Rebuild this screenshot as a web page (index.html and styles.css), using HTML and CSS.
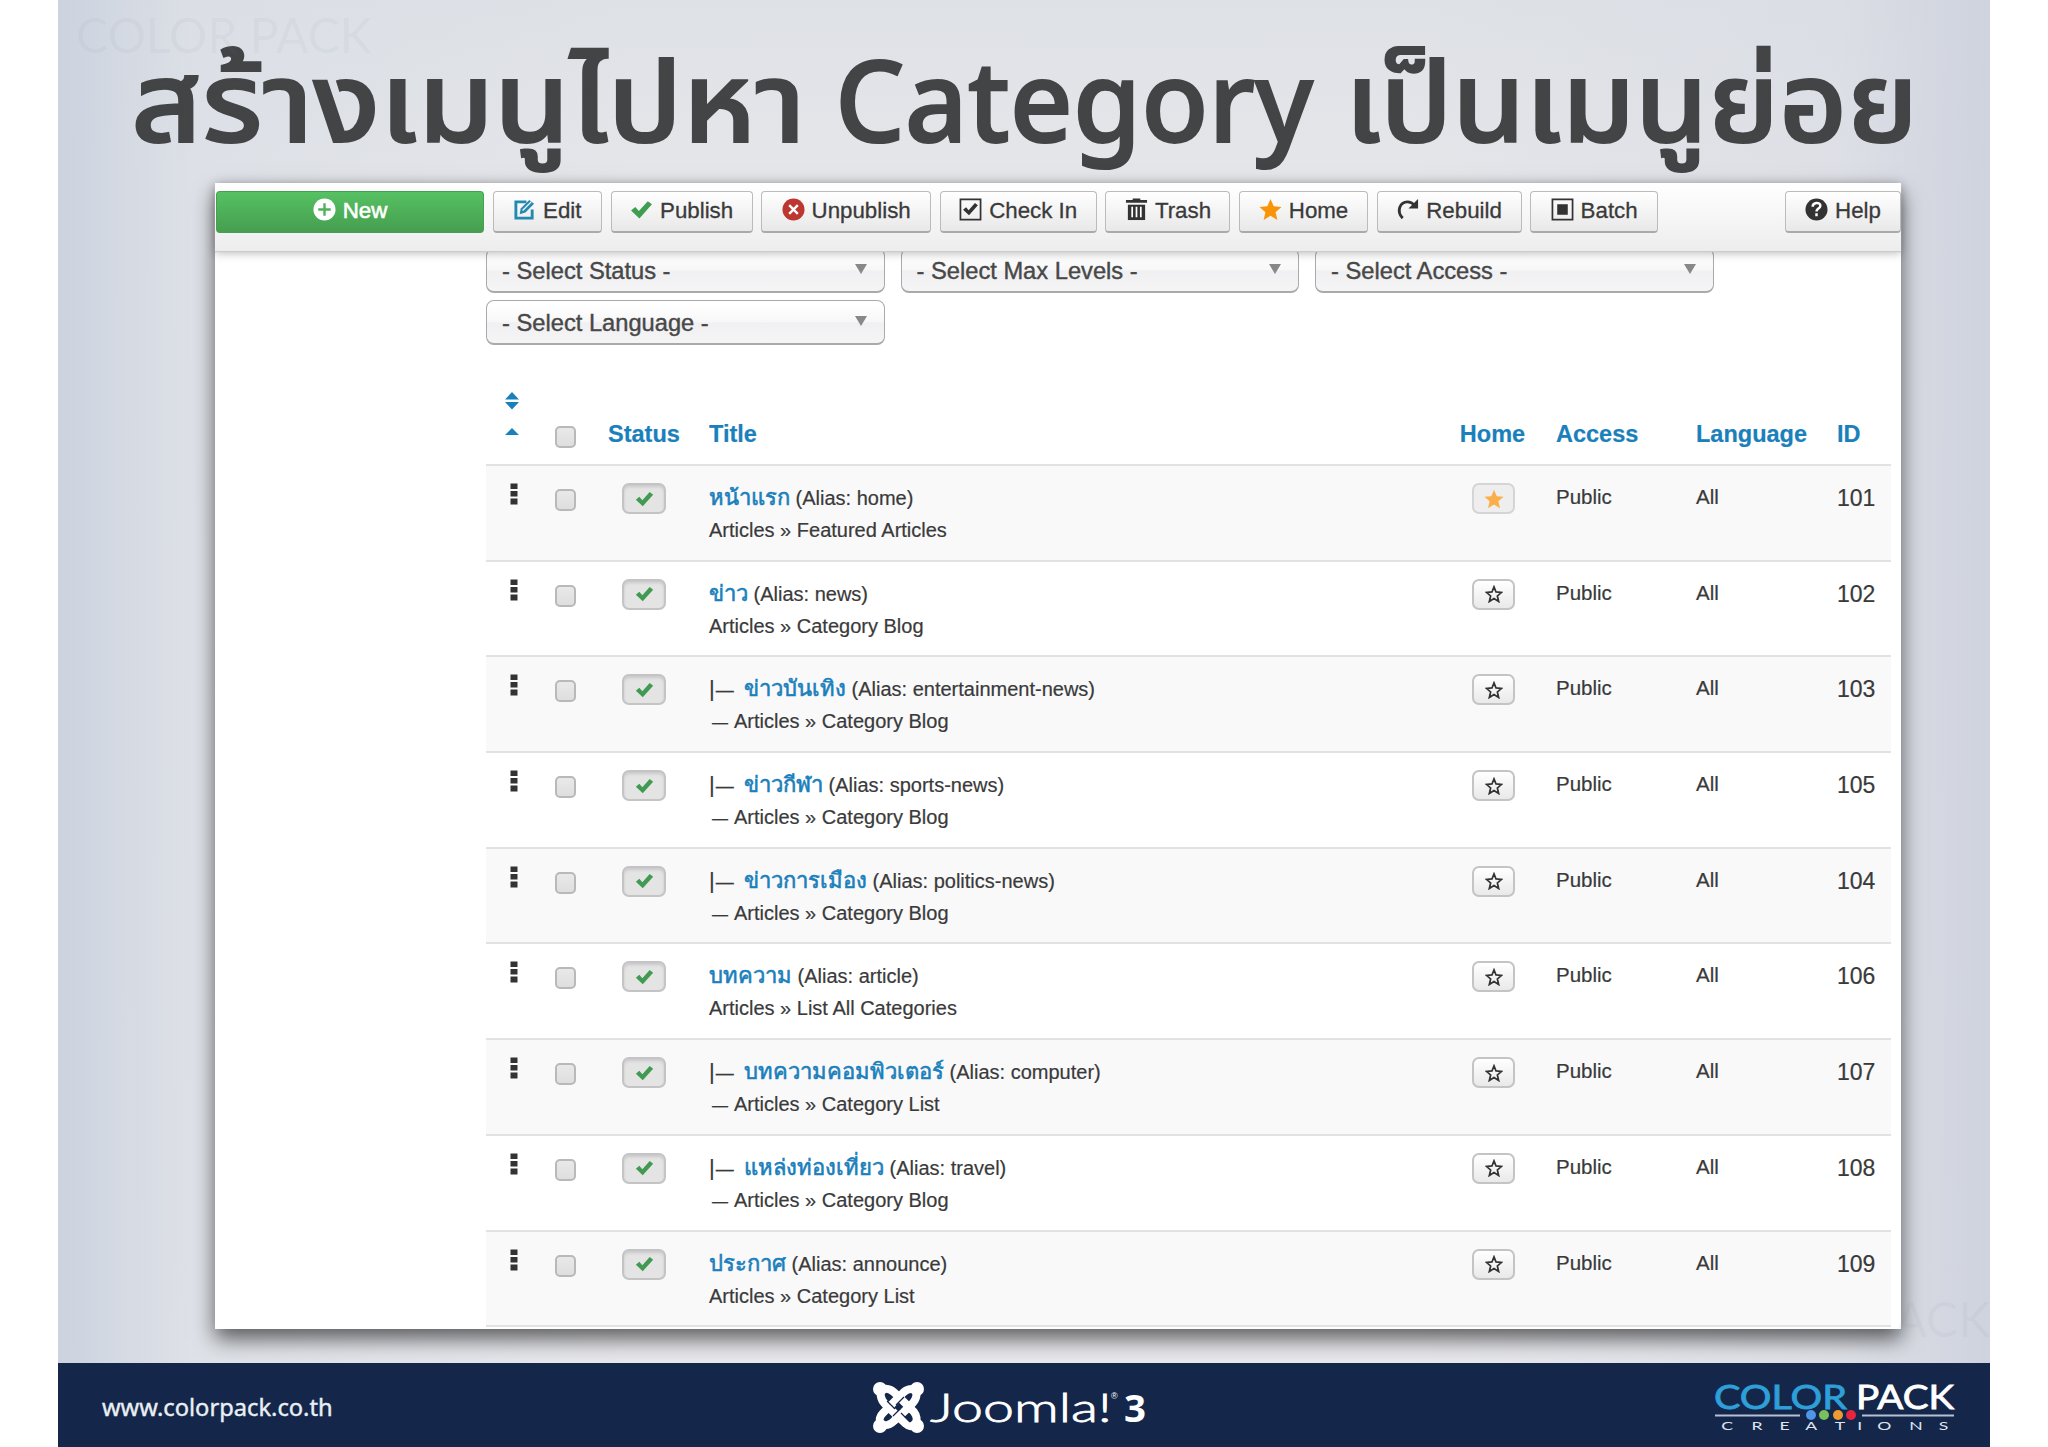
FILE: index.html
```html
<!DOCTYPE html>
<html lang="th">
<head>
    <meta charset="UTF-8">
    <title>สร้างเมนูไปหา Category เป็นเมนูย่อย</title>
    <link rel="stylesheet" href="styles.css">
</head>
<body>

    <!-- Shared icons -->
    <svg class="sprite">
        <symbol id="check" viewBox="0 0 22 18"><path d="M1 10 L5 6.500 L8.500 10.500 L17 1 L21 4 L9 17.500 Z"/></symbol>
        <symbol id="star" viewBox="0 0 24 24"><path d="M12 1 L15.300 8.700 L23.500 9.400 L17.300 14.800 L19.200 23 L12 18.600 L4.800 23 L6.700 14.800 L0.500 9.400 L8.700 8.700 Z"/></symbol>
        <symbol id="staro" viewBox="0 0 24 24"><path fill="none" stroke="currentColor" stroke-width="2.300" d="M12 2.500 L14.700 9.300 L22 9.900 L16.500 14.600 L18.200 22 L12 18 L5.800 22 L7.500 14.600 L2 9.900 L9.300 9.300 Z"/></symbol>
        <symbol id="grip" viewBox="0 0 8 22"><path d="M0.500 0.500h7v5.500h-7zM0.500 8h7v5.500h-7zM0.500 15.500h7v6h-7z"/></symbol>
    </svg>

    <div class="slide">
        <div class="watermark wm-top">COLOR PACK</div>
        <div class="watermark wm-bottom">ACK</div>

        <svg class="heading" viewBox="0 0 1932 183">
            <text x="73" y="142" textLength="675" lengthAdjust="spacingAndGlyphs">สร้างเมนูไปหา</text>
            <text x="777" y="142" textLength="478" lengthAdjust="spacingAndGlyphs">Category</text>
            <text x="1287" y="142" textLength="573" lengthAdjust="spacingAndGlyphs">เป็นเมนูย่อย</text>
        </svg>

        <div class="panel">
            <div class="toolbar">
                <div class="btn new"><svg viewBox="0 0 24 24"><circle cx="12" cy="12" r="11.500" fill="#fff"/><path d="M12 5.500v13M5.500 12h13" stroke="#4fb25a" stroke-width="2.500"/></svg>New</div>
                <div class="btn edit"><svg viewBox="0 0 24 24"><path d="M14 4H3v17h17v-9" fill="none" stroke="#2489b0" stroke-width="3"/><path d="M7 17l1-6 9-9 5 4-9 9z" fill="#2489b0"/><path d="M10 13l9-9" stroke="#fff" stroke-width="1.300"/></svg>Edit</div>
                <div class="btn publish"><svg class="green" viewBox="0 0 22 22"><use href="#check" width="22" height="18" y="2"/></svg>Publish</div>
                <div class="btn unpublish"><svg viewBox="0 0 24 24"><circle cx="12" cy="12" r="11.500" fill="#bd362f"/><path d="M7.500 7.500l9 9M16.500 7.500l-9 9" stroke="#fff" stroke-width="2.500"/></svg>Unpublish</div>
                <div class="btn checkin"><svg viewBox="0 0 24 24"><path d="M1.500 1.500h21v21h-21z" fill="none" stroke="#333" stroke-width="1.800"/><use href="#check" x="3.500" y="4" width="17" height="15"/></svg>Check In</div>
                <div class="btn trash"><svg viewBox="0 0 24 24"><path d="M1 3.500h22M8 2h8" stroke="#333" stroke-width="3"/><path d="M3 7h18v16H3z"/><path d="M7.500 9v11M12 9v11M16.500 9v11" stroke="#fff" stroke-width="1.800"/></svg>Trash</div>
                <div class="btn home"><svg class="orange" viewBox="0 0 24 24"><use href="#star"/></svg>Home</div>
                <div class="btn rebuild"><svg viewBox="0 0 24 24"><path d="M7 21C0 14 4 4 12 4c3 0 6 2 8 4" fill="none" stroke="#333" stroke-width="3"/><path d="M23 1v10H13z"/></svg>Rebuild</div>
                <div class="btn batch"><svg viewBox="0 0 24 24"><path d="M1.500 1.500h21v21h-21z" fill="none" stroke="#333" stroke-width="1.800"/><path d="M6.500 6.500h11v11h-11z"/></svg>Batch</div>
                <div class="btn help"><svg viewBox="0 0 24 24"><circle cx="12" cy="12" r="11.500"/><path d="M8 9c0-5 8-5 8-1 0 3-4 3-4 6M12 16v3" fill="none" stroke="#fff" stroke-width="2.600"/></svg>Help</div>
            </div>

            <div class="filters">
                <div class="select">- Select Status -<i></i></div>
                <div class="select">- Select Max Levels -<i></i></div>
                <div class="select">- Select Access -<i></i></div>
                <div class="select">- Select Language -<i></i></div>
            </div>

            <div class="table">
                <div class="row head">
                    <div class="order"><svg viewBox="0 0 14 52"><path d="M7 0l7 7.500H0zM0 10h14l-7 7.500zM7 36l7 7H0z"/></svg></div>
                    <div class="pick"><span class="box"></span></div>
                    <div class="status">Status</div>
                    <div class="title">Title</div>
                    <div class="default">Home</div>
                    <div>Access</div>
                    <div>Language</div>
                    <div>ID</div>
                </div>
                <div class="row">
                    <div class="order"><svg><use href="#grip"/></svg></div>
                    <div class="pick"><span class="box"></span></div>
                    <div class="status"><span class="mini on"><svg><use href="#check"/></svg></span></div>
                    <div class="title"><p><a>หน้าแรก</a> (Alias: home)</p><p>Articles » Featured Articles</p></div>
                    <div class="default"><span class="mini off"><svg><use href="#star"/></svg></span></div>
                    <div class="text">Public</div><div class="text">All</div><div class="id">101</div>
                </div>
                <div class="row">
                    <div class="order"><svg><use href="#grip"/></svg></div>
                    <div class="pick"><span class="box"></span></div>
                    <div class="status"><span class="mini on"><svg><use href="#check"/></svg></span></div>
                    <div class="title"><p><a>ข่าว</a> (Alias: news)</p><p>Articles » Category Blog</p></div>
                    <div class="default"><span class="mini"><svg><use href="#staro"/></svg></span></div>
                    <div class="text">Public</div><div class="text">All</div><div class="id">102</div>
                </div>
                <div class="row">
                    <div class="order"><svg><use href="#grip"/></svg></div>
                    <div class="pick"><span class="box"></span></div>
                    <div class="status"><span class="mini on"><svg><use href="#check"/></svg></span></div>
                    <div class="title child"><p><b>|<s>—</s></b><a>ข่าวบันเทิง</a> (Alias: entertainment-news)</p><p><em>—</em>Articles » Category Blog</p></div>
                    <div class="default"><span class="mini"><svg><use href="#staro"/></svg></span></div>
                    <div class="text">Public</div><div class="text">All</div><div class="id">103</div>
                </div>
                <div class="row">
                    <div class="order"><svg><use href="#grip"/></svg></div>
                    <div class="pick"><span class="box"></span></div>
                    <div class="status"><span class="mini on"><svg><use href="#check"/></svg></span></div>
                    <div class="title child"><p><b>|<s>—</s></b><a>ข่าวกีฬา</a> (Alias: sports-news)</p><p><em>—</em>Articles » Category Blog</p></div>
                    <div class="default"><span class="mini"><svg><use href="#staro"/></svg></span></div>
                    <div class="text">Public</div><div class="text">All</div><div class="id">105</div>
                </div>
                <div class="row">
                    <div class="order"><svg><use href="#grip"/></svg></div>
                    <div class="pick"><span class="box"></span></div>
                    <div class="status"><span class="mini on"><svg><use href="#check"/></svg></span></div>
                    <div class="title child"><p><b>|<s>—</s></b><a>ข่าวการเมือง</a> (Alias: politics-news)</p><p><em>—</em>Articles » Category Blog</p></div>
                    <div class="default"><span class="mini"><svg><use href="#staro"/></svg></span></div>
                    <div class="text">Public</div><div class="text">All</div><div class="id">104</div>
                </div>
                <div class="row">
                    <div class="order"><svg><use href="#grip"/></svg></div>
                    <div class="pick"><span class="box"></span></div>
                    <div class="status"><span class="mini on"><svg><use href="#check"/></svg></span></div>
                    <div class="title"><p><a>บทความ</a> (Alias: article)</p><p>Articles » List All Categories</p></div>
                    <div class="default"><span class="mini"><svg><use href="#staro"/></svg></span></div>
                    <div class="text">Public</div><div class="text">All</div><div class="id">106</div>
                </div>
                <div class="row">
                    <div class="order"><svg><use href="#grip"/></svg></div>
                    <div class="pick"><span class="box"></span></div>
                    <div class="status"><span class="mini on"><svg><use href="#check"/></svg></span></div>
                    <div class="title child"><p><b>|<s>—</s></b><a>บทความคอมพิวเตอร์</a> (Alias: computer)</p><p><em>—</em>Articles » Category List</p></div>
                    <div class="default"><span class="mini"><svg><use href="#staro"/></svg></span></div>
                    <div class="text">Public</div><div class="text">All</div><div class="id">107</div>
                </div>
                <div class="row">
                    <div class="order"><svg><use href="#grip"/></svg></div>
                    <div class="pick"><span class="box"></span></div>
                    <div class="status"><span class="mini on"><svg><use href="#check"/></svg></span></div>
                    <div class="title child"><p><b>|<s>—</s></b><a>แหล่งท่องเที่ยว</a> (Alias: travel)</p><p><em>—</em>Articles » Category Blog</p></div>
                    <div class="default"><span class="mini"><svg><use href="#staro"/></svg></span></div>
                    <div class="text">Public</div><div class="text">All</div><div class="id">108</div>
                </div>
                <div class="row">
                    <div class="order"><svg><use href="#grip"/></svg></div>
                    <div class="pick"><span class="box"></span></div>
                    <div class="status"><span class="mini on"><svg><use href="#check"/></svg></span></div>
                    <div class="title"><p><a>ประกาศ</a> (Alias: announce)</p><p>Articles » Category List</p></div>
                    <div class="default"><span class="mini"><svg><use href="#staro"/></svg></span></div>
                    <div class="text">Public</div><div class="text">All</div><div class="id">109</div>
                </div>
            </div>
        </div>

        <div class="footer">
            <div class="site">www.colorpack.co.th</div>
            <svg class="joomla" viewBox="0 0 280 60">
                <g fill="none" stroke="#fff" stroke-width="8">
                    <path d="M9 10C7 20 13 24 18 29L34 44C38 48 42 46 44 42"/>
                    <path d="M44 10C35 6 30 14 26 18L11 33C7 37 7 42 9 45"/>
                    <path d="M9 10C17 6 22 12 27 17L42 32C46 37 45 42 44 46"/>
                    <path d="M44 10C46 18 42 22 37 27L22 41C17 46 13 46 8 44"/>
                </g>
                <path d="M15 21L23 29M29 33L38 42M24 25L32 17M21 36L29 28" stroke="#14274a" stroke-width="1.200"/>
                <g fill="#fff"><circle cx="8" cy="9" r="7"/><circle cx="45" cy="9" r="7"/><circle cx="8" cy="46" r="7"/><circle cx="45" cy="46" r="7"/></g>
                <text class="word" x="58" y="42" textLength="182" lengthAdjust="spacingAndGlyphs">Joomla!</text>
                <text class="reg" x="239" y="19">®</text>
                <text class="three" x="252" y="42" textLength="22" lengthAdjust="spacingAndGlyphs">3</text>
            </svg>
            <svg class="colorpack" viewBox="0 0 244 52">
                <text class="name blue" x="0" y="26" textLength="133" lengthAdjust="spacingAndGlyphs">COLOR</text>
                <text class="name white" x="142" y="26" textLength="98" lengthAdjust="spacingAndGlyphs">PACK</text>
                <path d="M1 32.500H86M148 32.500H240" stroke="#b5c0d4" stroke-width="2"/>
                <circle cx="97" cy="32" r="5" fill="#4f96e8"/><circle cx="110" cy="32" r="5" fill="#78c05a"/><circle cx="124" cy="32" r="5" fill="#ee9a32"/><circle cx="137" cy="32" r="5" fill="#e5263f"/>
                <g class="sub" transform="scale(1.6 1)">
                    <text y="47" x="4.500 23.500 41 57 75.500 89.500 102 122 140.500">CREATIONS</text>
                </g>
            </svg>
        </div>
    </div>

</body>
</html>
```
FILE: styles.css
```css
body {
    margin: 0;
    background: #fff;
    font-family: "Liberation Sans", Arial, sans-serif;
    color: #3a3a3a;
}
p {
    margin: 0;
}
.sprite {
    display: none;
}
.slide {
    position: relative;
    width: 1932px;
    height: 1447px;
    margin-left: 58px;
    overflow: hidden;
    display: flex;
    flex-direction: column;
    background: linear-gradient(90deg, #ccd3df 0, rgba(218, 222, 229, 0.7) 7%, rgba(228, 229, 234, 0) 30%, rgba(232, 232, 237, 0) 70%, rgba(218, 221, 228, 0.7) 92%, #cfd3de 100%), linear-gradient(180deg, #dee1e6 0, #e5e6ea 12%, #e8e8ec 100%);
}
.watermark {
    position: absolute;
    font-family: Lato, sans-serif;
    color: rgba(120, 130, 150, 0.07);
    white-space: nowrap;
}
.wm-top {
    left: 18px;
    top: 6px;
    font-size: 48px;
}
.wm-bottom {
    right: 0;
    top: 1290px;
    font-size: 48px;
}
.heading {
    display: block;
    width: 1932px;
    height: 183px;
    flex: none;
    font-family: "Noto Sans", "Noto Sans Thai", sans-serif;
    font-size: 112px;
    font-weight: 500;
    fill: #424446;
    stroke: #424446;
    stroke-width: 2px;
}

/* Screenshot panel */
.panel {
    width: 1686px;
    height: 1146px;
    margin-left: 157px;
    flex: none;
    background: #fff;
    box-shadow: 0 10px 20px rgba(0, 0, 0, 0.6);
}
.toolbar {
    position: relative;
    z-index: 1;
    display: flex;
    gap: 8.800px;
    height: 60px;
    padding: 8px 0 0 1px;
    background: linear-gradient(#fff, #ededee);
    box-shadow: 0 1px 1px #ccc, 0 2px 9px rgba(0, 0, 0, 0.28);
}
.btn {
    box-sizing: border-box;
    height: 42px;
    display: flex;
    justify-content: center;
    align-items: center;
    gap: 7px;
    padding-bottom: 1px;
    border: 1px solid #bbb;
    border-bottom: 2px solid #aaa;
    border-radius: 4px;
    background: linear-gradient(#fff, #e8e8e9);
    font-size: 22.300px;
    white-space: nowrap;
    -webkit-text-stroke: 0.300px currentColor;
}
.btn svg {
    width: 23px;
    height: 23px;
    fill: #333;
    margin-top: -4px;
}
.btn .green {
    fill: #3f9d50;
}
.btn .orange {
    fill: #f89406;
}
.new {
    width: 268px;
    color: #fff;
    border-color: #46a050;
    background: linear-gradient(#56c162, #469f50);
    -webkit-text-stroke: 0.600px #fff;
}
.edit { width: 109px; }
.publish { width: 142px; }
.unpublish { width: 169.500px; }
.checkin { width: 157px; }
.trash { width: 125px; }
.home { width: 128.500px; }
.rebuild { width: 145px; }
.batch { width: 127.500px; }
.help { width: 116px; margin-left: auto; }

.filters {
    display: flex;
    flex-wrap: wrap;
    gap: 7px 16px;
    padding-left: 271px;
    margin-top: -3px;
}
.select {
    box-sizing: border-box;
    width: 398.500px;
    height: 45px;
    display: flex;
    justify-content: space-between;
    align-items: center;
    padding: 3px 17px 0 15px;
    border: 1px solid #aaa;
    border-bottom-width: 2px;
    border-radius: 8px;
    background: linear-gradient(#fff 10%, #f7f7f8 50%, #f0f0f2 52%, #f5f5f6 100%);
    font-size: 23.700px;
    color: #484848;
    -webkit-text-stroke: 0.400px currentColor;
}
.select i {
    border: 6.500px solid transparent;
    border-top: 10px solid #888;
    border-bottom: 0;
    margin-top: -6px;
}

/* Menu item list */
.table {
    margin: 38px 0 0 271px;
    width: 1405px;
}
.row {
    display: grid;
    grid-template-columns: 53px 53px 104px 733px 127px 140px 141px 54px;
    box-sizing: border-box;
    height: 95.700px;
    padding-top: 16px;
    border-top: 2px solid #e2e2e4;
    font-size: 20.500px;
    line-height: 32px;
    -webkit-text-stroke: 0.200px currentColor;
}
.row:nth-child(even) {
    background: #f9f9fa;
}
.row:last-child {
    border-bottom: 2px solid #e2e2e4;
    height: 97.700px;
}
.head {
    height: 81px;
    padding-top: 35px;
    border: 0;
    color: #1a80bb;
    font-size: 23.500px;
    font-weight: bold;
}
.order {
    text-align: center;
}
.order svg {
    display: block;
    width: 8px;
    height: 22px;
    margin: 1px 0 0 24px;
    fill: #333;
}
.head .order svg {
    width: 14px;
    height: 52px;
    fill: #1a80bb;
    margin: -26px 0 0 19px;
}
.box {
    display: block;
    box-sizing: border-box;
    width: 21px;
    height: 22px;
    margin: 7px auto 0;
    border: 2px solid #b9b9bb;
    border-radius: 5px;
    background: linear-gradient(#e9e9ea, #dededf);
}
.head .box {
    margin-top: 8px;
}
.status,
.default {
    text-align: center;
}
.head .status {
    text-align: left;
    padding-left: 16px;
}
.mini {
    box-sizing: border-box;
    display: flex;
    justify-content: center;
    align-items: center;
    width: 43px;
    height: 31px;
    margin: 1px auto 0;
    border: 2px solid #c4c4c6;
    border-radius: 7px;
    background: linear-gradient(#fff, #e9e9ea);
    color: #333;
}
.default .mini {
    margin-left: 43px;
}
.mini svg {
    width: 18px;
    height: 18px;
}
.mini.on {
    width: 44px;
    background: #e4e4e5;
    box-shadow: inset 0 2px 3px rgba(0, 0, 0, 0.12);
}
.mini.on svg {
    width: 19px;
    height: 16px;
    fill: #419a52;
}
.mini.off {
    background: #eee;
    border-color: #d5d5d6;
}
.mini.off svg {
    width: 20px;
    height: 20px;
    fill: #fbae4c;
}
.title {
    padding-left: 13px;
    font-size: 20px;
    white-space: nowrap;
}
.head .title {
    font-size: 23.500px;
}
.title a {
    font-size: 22px;
    color: #1a80bb;
    -webkit-text-stroke: 0.600px #1a80bb;
}
.title p {
    height: 32px;
}
.title b,
.title em {
    display: inline-block;
    font-weight: normal;
    font-style: normal;
}
.title b {
    width: 35px;
    font-size: 22px;
}
.title s {
    font-size: 18px;
    text-decoration: none;
    margin-left: 1px;
}
.title em {
    width: 22px;
    font-size: 16px;
    padding-left: 3px;
}
.text {
    margin-top: -1px;
}
.id {
    font-size: 23px;
}

.footer {
    display: flex;
    align-items: flex-start;
    height: 84px;
    margin-top: 34px;
    flex: none;
    background: #14274a;
}
.site {
    width: 770px;
    margin: 27px 0 0 44px;
    font-family: "Noto Sans", sans-serif;
    font-size: 23.700px;
    line-height: 34px;
    color: #e9eff4;
    -webkit-text-stroke: 0.400px #e9eff4;
}
.joomla {
    width: 280px;
    height: 60px;
    margin-top: 17px;
}
.joomla text {
    fill: #fff;
}
.joomla .word {
    font-family: Lato, sans-serif;
    font-weight: 300;
    font-size: 39px;
    stroke: #fff;
    stroke-width: 0.800px;
}
.reg {
    font-size: 9px;
}
.three {
    font-family: "Noto Sans", sans-serif;
    font-weight: bold;
    font-size: 37px;
}
.colorpack {
    width: 244px;
    height: 52px;
    margin: 20px 0 0 562px;
    overflow: visible;
}
.name {
    font-family: Lato, sans-serif;
    font-size: 32px;
    stroke-width: 0.800px;
}
.blue {
    fill: #2e9fd8;
    stroke: #2e9fd8;
}
.white {
    fill: #fff;
    stroke: #fff;
}
.sub {
    font-family: Lato, sans-serif;
    font-size: 11px;
    fill: #dfe5ef;
}
```
